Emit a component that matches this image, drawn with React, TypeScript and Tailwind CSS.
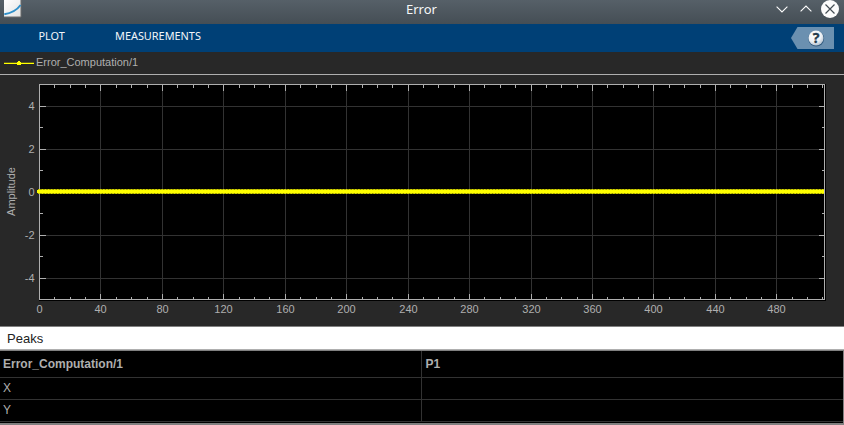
import React from 'react';

const X_LABELS = [0, 40, 80, 120, 160, 200, 240, 280, 320, 360, 400, 440, 480];
const Y_LABELS = [4, 2, 0, -2, -4];
const X_TICKS = Array.from({ length: 51 }, (_, i) => (i + 1) * 10);
const Y_TICKS = [4, 3, 2, 1, 0, -1, -2, -3, -4];

const LEFT = 39.5;
const RIGHT = 824.5;
const TOP = 84.5 - 75;
const BOTTOM = 299.5 - 75;

const px = (v: number) => Math.floor(39.5 + v * 1.5362) + 0.5;
const py = (v: number) => Math.floor(192 - v * 21.5) - 75 + 0.5;

function TitleBar() {
  return (
    <header className="relative flex h-6 shrink-0 items-center justify-between bg-linear-to-b from-[#566068] to-[#454e55] pr-[5px] pl-1">
      <svg width="18" height="18" viewBox="0 0 18 18" className="-mt-[7px]">
        <defs>
          <linearGradient id="paper" x1="0" y1="0" x2="1" y2="1">
            <stop offset="0" stopColor="#fff" />
            <stop offset="1" stopColor="#e2e2e2" />
          </linearGradient>
        </defs>
        <rect x="0" y="0" width="17" height="17" fill="url(#paper)" />
        <path d="M0 17H17V0" fill="none" stroke="#6b6b6b" strokeWidth="1" />
        <path d="M0.3 14.2C8 13 13 10 16.6 5" fill="none" stroke="#2f8fc9" strokeWidth="1.9" />
      </svg>
      <h1 className="absolute inset-x-0 top-0 pr-px text-center font-['Noto_Sans',sans-serif] text-[13px] leading-[19px] text-[#f5f7f8]">
        Error
      </h1>
      <svg width="64" height="20" viewBox="775 0 64 20" fill="none" className="-mt-1">
        <path d="M776.6 6.6L782 12L787.4 6.6M800.6 11.4L806 6L811.4 11.4" stroke="#fcfcfc" strokeWidth="1.1" />
        <circle cx="830" cy="9" r="9" fill="#fcfcfc" />
        <path d="M825.5 4.5L834.5 13.5M834.5 4.5L825.5 13.5" stroke="#454e55" strokeWidth="1.2" />
      </svg>
    </header>
  );
}

function Toolstrip() {
  return (
    <nav className="flex h-7 shrink-0 items-start justify-between bg-[#004076] pr-[10px] pl-[38.5px]">
      <div className="flex gap-[48.5px] pt-[3px] font-['Noto_Sans',sans-serif] text-[10.9px] leading-[18px] text-[#f2f6fa]">
        <span className="w-7 whitespace-nowrap">PLOT</span>
        <span className="whitespace-nowrap">MEASUREMENTS</span>
      </div>
      <svg width="43" height="28" viewBox="791 24 43 28">
        <defs>
          <radialGradient id="ball" cx="0.4" cy="0.3" r="0.75">
            <stop offset="0" stopColor="#fff" />
            <stop offset="0.6" stopColor="#edf1f5" />
            <stop offset="1" stopColor="#aebccb" />
          </radialGradient>
        </defs>
        <path d="M791 38L797.5 27H834V49H797.5Z" fill="#6b90b0" />
        <circle cx="816.2" cy="38.6" r="7.9" fill="#335c80" />
        <circle cx="816" cy="38" r="7.5" fill="url(#ball)" />
        <text
          x="816"
          y="42.5"
          textAnchor="middle"
          className="font-['Noto_Sans',sans-serif] text-[14px] font-bold"
          fill="#263b4c"
          stroke="#263b4c"
          strokeWidth="0.3"
        >
          ?
        </text>
      </svg>
    </nav>
  );
}

function Legend() {
  return (
    <div className="flex h-[23px] shrink-0 items-start border-b border-[#afafaf] bg-[#282828] pl-1">
      <svg width="30" height="22" viewBox="0 0 30 22" shapeRendering="crispEdges">
        <rect x="0" y="10" width="30" height="1" fill="#5e5e14" />
        <rect x="0" y="11" width="30" height="1" fill="#ffff00" />
        <rect x="13" y="10" width="4" height="3" fill="#ffff00" />
        <rect x="14" y="9" width="2" height="4" fill="#ffff00" />
      </svg>
      <span className="pl-[2px] font-['Liberation_Sans',sans-serif] text-[11px] leading-[21px] text-[#afafaf]">
        Error_Computation/1
      </span>
    </div>
  );
}

function Plot() {
  return (
    <svg width="844" height="251" viewBox="0 0 844 251" className="block shrink-0 bg-[#282828] font-['Liberation_Sans',sans-serif] text-[11px]">
      <g shapeRendering="crispEdges" fill="none">
        <rect x="39" y="9" width="787" height="217" fill="#000" />
        {X_LABELS.slice(1).map((v) => (
          <path key={v} d={`M${px(v)} ${TOP}V${BOTTOM}`} stroke="#323232" />
        ))}
        {Y_LABELS.map((v) => (
          <path key={v} d={`M${LEFT} ${py(v)}H${RIGHT}`} stroke="#323232" />
        ))}
        {X_TICKS.map((v) => {
          const n = v % 40 === 0 ? 6 : 3;
          return <path key={v} d={`M${px(v)} ${TOP}v${n}M${px(v)} ${BOTTOM}v-${n}`} stroke="#afafaf" />;
        })}
        {Y_TICKS.map((v) => {
          const n = v % 2 === 0 ? 6 : 3;
          return <path key={v} d={`M${LEFT} ${py(v)}h${n}M${RIGHT} ${py(v)}h-${n}`} stroke="#afafaf" />;
        })}
        <path d={`M${LEFT} ${TOP}H${RIGHT}V${BOTTOM}H${LEFT}Z`} stroke="#afafaf" />
      </g>
      <path d="M38 116.5H824" stroke="#8f8f00" strokeWidth="5" />
      <path d="M38.5 116.5H824" stroke="#dcdc00" strokeWidth="5" strokeDasharray="1.7 1.3724" />
      <path d="M37 116.5H824" stroke="#ffff00" strokeWidth="3" />
      <g fill="#afafaf">
        {X_LABELS.map((v) => (
          <text key={v} x={v === 0 ? 39.5 : px(v)} y="238" textAnchor="middle">
            {v}
          </text>
        ))}
        {Y_LABELS.map((v) => (
          <text key={v} x="34.5" y={v > 0 ? py(v) + 3.5 : py(v) + 3.5} textAnchor="end">
            {v}
          </text>
        ))}
        <text transform="translate(15 116.5) rotate(-90)" textAnchor="middle">
          Amplitude
        </text>
      </g>
    </svg>
  );
}

function Peaks() {
  return (
    <section className="flex h-[99px] shrink-0 flex-col bg-black font-['Liberation_Sans',sans-serif]">
      <h2 className="h-6 shrink-0 border-t border-b border-t-[#808080] border-b-[#afafaf] bg-white pl-[7px] text-[13px] leading-[23px] text-[#222]">
        Peaks
      </h2>
      <div className="flex grow flex-col border-t border-r border-b-2 border-[#808080] text-[12px] text-[#afafaf]">
        <div className="flex h-[27px] border-b border-[#323232] leading-[26px] font-bold">
          <div className="w-[422px] border-r border-[#323232] pl-[3px]">Error_Computation/1</div>
          <div className="pl-[3.5px]">P1</div>
        </div>
        {['X', 'Y'].map((name) => (
          <div key={name} className="flex h-[22px] border-b border-[#323232] leading-[21px]">
            <div className="w-[422px] border-r border-[#323232] pl-[3px]">{name}</div>
          </div>
        ))}
      </div>
    </section>
  );
}

export default function App() {
  return (
    <main className="flex h-[425px] w-[844px] flex-col overflow-hidden bg-[#282828]">
      <TitleBar />
      <Toolstrip />
      <Legend />
      <Plot />
      <Peaks />
    </main>
  );
}
